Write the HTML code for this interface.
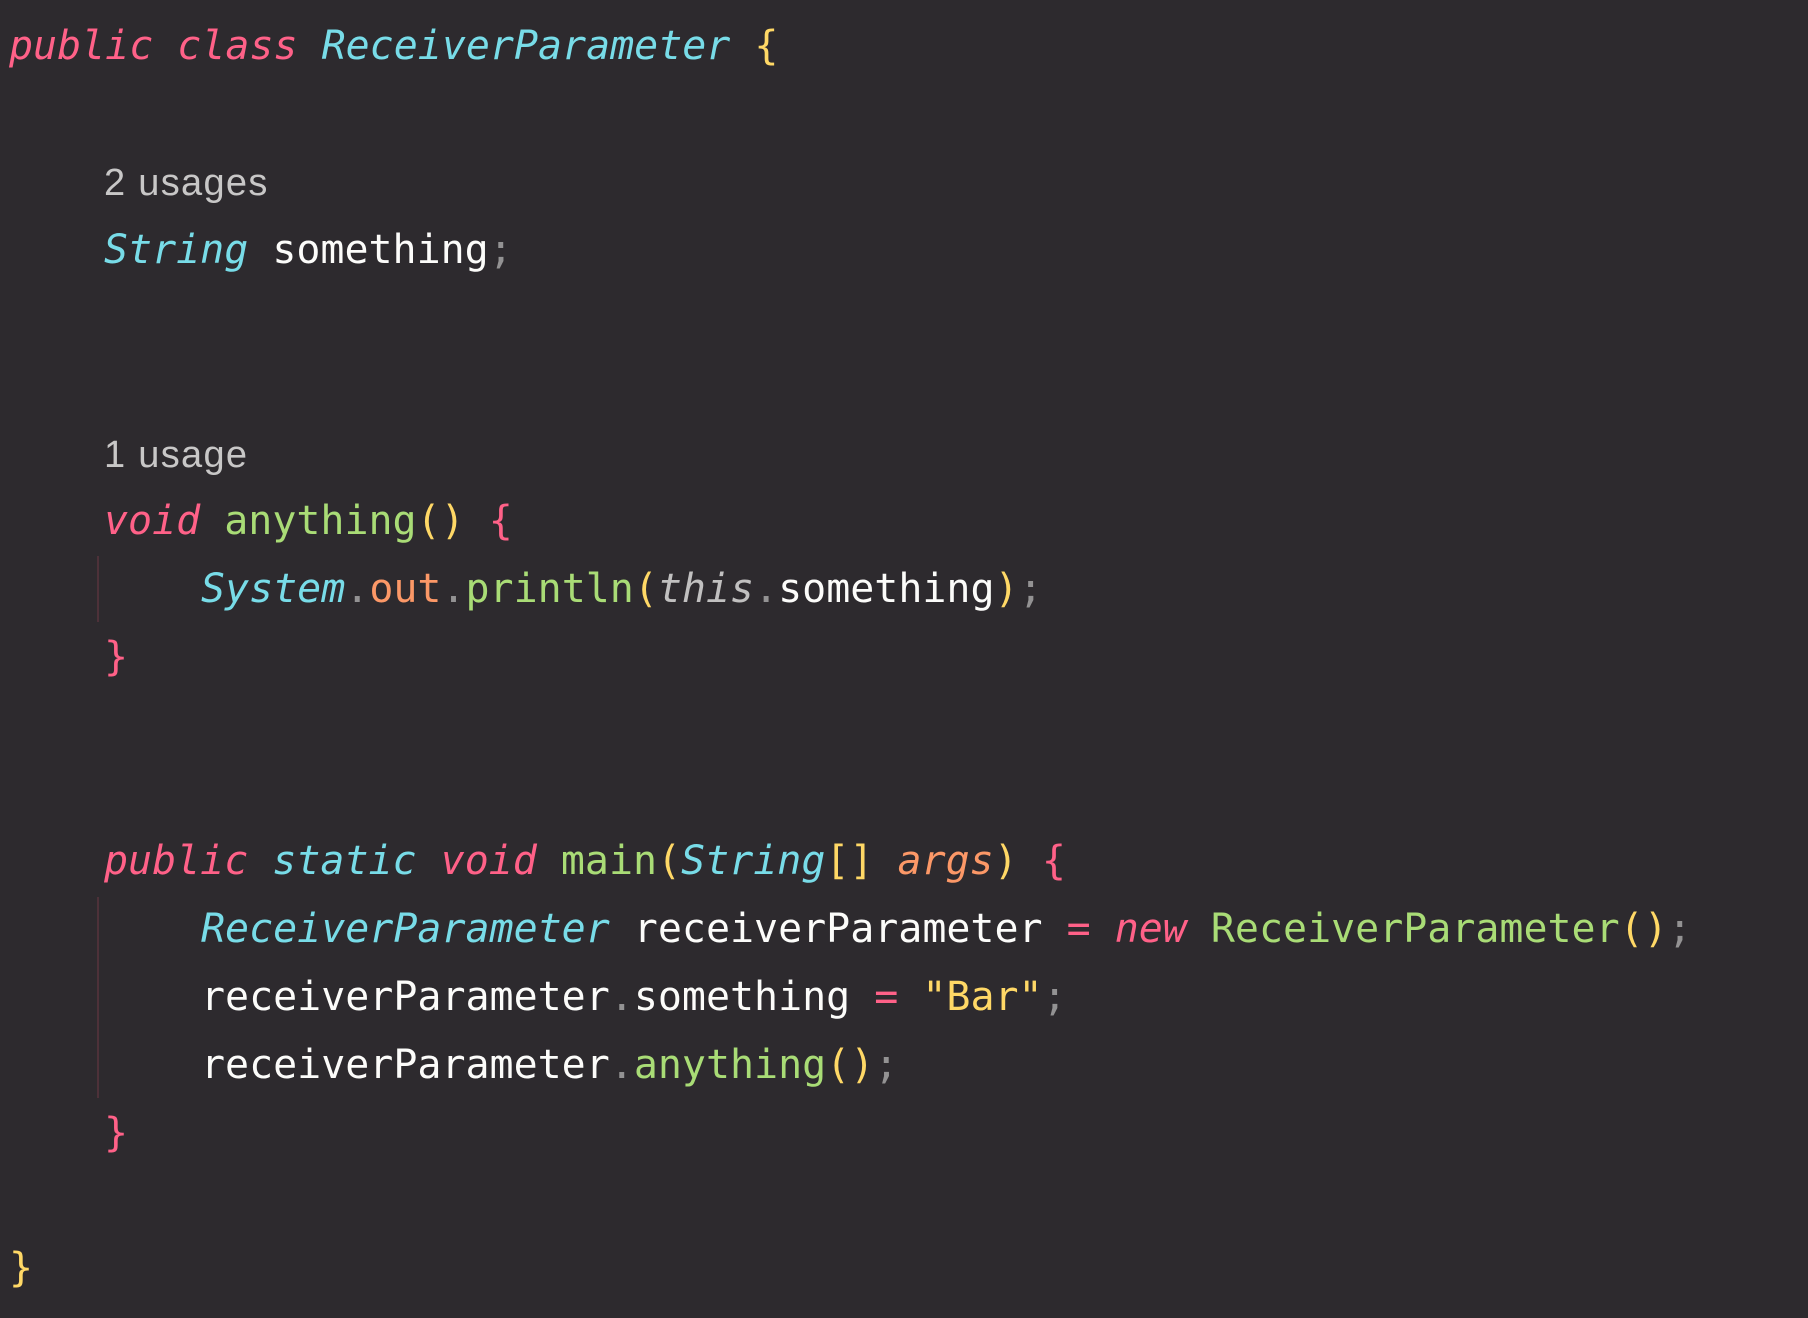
<!DOCTYPE html>
<html><head><style>
body{margin:0;width:1808px;height:1318px;background:#2d2a2e;overflow:hidden;position:relative;font-family:"DejaVu Sans Mono","Liberation Mono",monospace;font-size:39.95px;color:#fcfcfa}
.l{position:absolute;height:68px;line-height:68px;white-space:pre}
.u{font-family:"Liberation Sans",sans-serif;font-size:38px;color:#c8c7c7;letter-spacing:1.3px}
.k{color:#ff6188;font-style:italic}
.t{color:#78dce8;font-style:italic}
.f{color:#a9dc76}
.o{color:#fc9867}
.oi{color:#fc9867;font-style:italic}
.y{color:#ffd866}
.p{color:#939293}
.pk{color:#ff6188}
.th{color:#c1c0c0;font-style:italic}
.g{position:absolute;left:97px;width:2px;background:#4d3139}
</style></head><body>
<div class="l" style="left:9px;top:12px"><span class="k">public class</span> <span class="t">ReceiverParameter</span> <span class="y">{</span></div>
<div class="l u" style="left:104px;top:149px">2 usages</div>
<div class="l" style="left:104px;top:216px"><span class="t">String</span> something<span class="p">;</span></div>
<div class="l u" style="left:104px;top:421px">1 usage</div>
<div class="l" style="left:104px;top:487px"><span class="k">void</span> <span class="f">anything</span><span class="y">()</span> <span class="pk">{</span></div>
<div class="g" style="top:556px;height:66px"></div>
<div class="l" style="left:201px;top:555px"><span class="t">System</span><span class="p">.</span><span class="o">out</span><span class="p">.</span><span class="f">println</span><span class="y">(</span><span class="th">this</span><span class="p">.</span>something<span class="y">)</span><span class="p">;</span></div>
<div class="l" style="left:104px;top:623px"><span class="pk">}</span></div>
<div class="l" style="left:104px;top:827px"><span class="k">public</span> <span class="t">static</span> <span class="k">void</span> <span class="f">main</span><span class="y">(</span><span class="t">String</span><span class="y">[]</span> <span class="oi">args</span><span class="y">)</span> <span class="pk">{</span></div>
<div class="g" style="top:897px;height:201px"></div>
<div class="l" style="left:201px;top:895px"><span class="t">ReceiverParameter</span> receiverParameter <span class="pk">=</span> <span class="k">new</span> <span class="f">ReceiverParameter</span><span class="y">()</span><span class="p">;</span></div>
<div class="l" style="left:201px;top:963px">receiverParameter<span class="p">.</span>something <span class="pk">=</span> <span class="y">"Bar"</span><span class="p">;</span></div>
<div class="l" style="left:201px;top:1031px">receiverParameter<span class="p">.</span><span class="f">anything</span><span class="y">()</span><span class="p">;</span></div>
<div class="l" style="left:104px;top:1099px"><span class="pk">}</span></div>
<div class="l" style="left:9px;top:1234px"><span class="y">}</span></div>
</body></html>
